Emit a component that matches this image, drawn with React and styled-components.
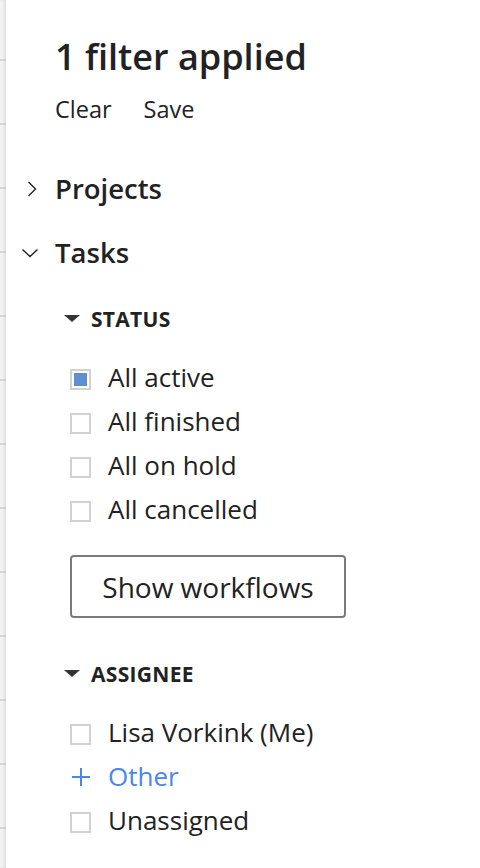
import * as React from "react";
import styled, { createGlobalStyle } from "styled-components";

const GlobalStyle = createGlobalStyle`
  html, body {
    margin: 0;
    padding: 0;
    background: #ffffff;
  }
  body {
    font-family: "Open Sans", "Noto Sans", sans-serif;
    color: #222222;
  }
`;

const statusItems = [
  { label: "All active", checked: true },
  { label: "All finished", checked: false },
  { label: "All on hold", checked: false },
  { label: "All cancelled", checked: false },
];

const ChevronRight = () => (
  <svg width="16" height="16" viewBox="0 0 16 16" fill="none">
    <path d="M4.5 1 L11.5 8 L4.5 15" stroke="#222" strokeWidth="1.4" />
  </svg>
);

const ChevronDown = () => (
  <svg width="16" height="16" viewBox="0 0 16 16" fill="none">
    <path d="M0.5 4.5 L8 11.5 L15.5 4.5" stroke="#222" strokeWidth="1.4" />
  </svg>
);

const Caret = () => (
  <svg width="16" height="8" viewBox="0 0 16 8">
    <path d="M0 0 H16 L8 7 Z" fill="#333" />
  </svg>
);

const Plus = () => (
  <svg width="20" height="20" viewBox="0 0 20 20" fill="none">
    <path d="M10 1 V19 M1 10 H19" stroke="#4a86ec" strokeWidth="2" />
  </svg>
);

const App = () => {
  return (
    <>
      <GlobalStyle />
      <Page>
        <Backdrop />
        <Panel>
          <Title>1 filter applied</Title>
          <Actions>
            <ActionLink>Clear</ActionLink>
            <ActionLink>Save</ActionLink>
          </Actions>

          <SectionRow $first>
            <ChevronBox $offset="4px">
              <ChevronRight />
            </ChevronBox>
            <SectionTitle>Projects</SectionTitle>
          </SectionRow>

          <SectionRow>
            <ChevronBox $offset="2px">
              <ChevronDown />
            </ChevronBox>
            <SectionTitle>Tasks</SectionTitle>
          </SectionRow>

          <Group>
            <GroupHeader>
              <Caret />
              <GroupTitle>STATUS</GroupTitle>
            </GroupHeader>
            <List>
              {statusItems.map((item) => (
                <Option key={item.label}>
                  <Box $checked={item.checked} />
                  <OptionText>{item.label}</OptionText>
                </Option>
              ))}
            </List>
            <OutlineButton>Show workflows</OutlineButton>
          </Group>

          <Group $spaced>
            <GroupHeader>
              <Caret />
              <GroupTitle>ASSIGNEE</GroupTitle>
            </GroupHeader>
            <List>
              <Option>
                <Box />
                <OptionText>Lisa Vorkink (Me)</OptionText>
              </Option>
              <Option>
                <PlusBox>
                  <Plus />
                </PlusBox>
                <OptionText $link>Other</OptionText>
              </Option>
              <Option>
                <Box />
                <OptionText>Unassigned</OptionText>
              </Option>
            </List>
          </Group>
        </Panel>
      </Page>
    </>
  );
};

const Page = styled.div`
  display: flex;
  width: 480px;
  min-height: 868px;
`;

const Backdrop = styled.div`
  width: 6px;
  flex-shrink: 0;
  background:
    repeating-linear-gradient(
      to bottom,
      transparent 0px,
      transparent 58px,
      #d6d6d6 58px,
      #d6d6d6 60px,
      transparent 60px,
      transparent 64px
    ),
    linear-gradient(to right, #f4f4f4, #ececec);
  background-position: 0 1px, 0 0;
  box-shadow: inset -2px 0 3px rgba(0, 0, 0, 0.05);
`;

const Panel = styled.div`
  flex: 1;
  background: #ffffff;
  padding: 32px 20px 0 14px;
  box-sizing: border-box;
`;

const Title = styled.h1`
  margin: 0 0 0 35px;
  font-size: 36px;
  line-height: 50px;
  font-weight: 600;
  color: #222;
`;

const Actions = styled.div`
  display: flex;
  gap: 32px;
  margin: 11px 0 0 35px;
`;

const ActionLink = styled.span`
  font-size: 23.5px;
  line-height: 32px;
  color: #222;
`;

const SectionRow = styled.div`
  display: flex;
  align-items: center;
  height: 40px;
  margin-top: ${(p) => (p.$first ? "44px" : "24px")};
`;

const ChevronBox = styled.div`
  width: 35px;
  display: flex;
  align-items: center;
  padding-left: ${(p) => p.$offset || "0px"};
  box-sizing: border-box;
`;

const SectionTitle = styled.span`
  font-size: 27.5px;
  line-height: 40px;
  font-weight: 600;
  color: #222;
`;

const Group = styled.div`
  margin-left: 44px;
  margin-top: ${(p) => (p.$spaced ? "41px" : "31px")};
`;

const GroupHeader = styled.div`
  display: flex;
  align-items: center;
  gap: 11px;
  height: 30px;
`;

const GroupTitle = styled.span`
  font-size: 21px;
  line-height: 30px;
  font-weight: 700;
  color: #222;
  letter-spacing: 0.3px;
`;

const List = styled.div`
  display: flex;
  flex-direction: column;
  margin-top: 21px;
  margin-left: 6px;
`;

const Option = styled.div`
  display: flex;
  align-items: center;
  gap: 17px;
  height: 44px;
`;

const Box = styled.span`
  width: 21px;
  height: 21px;
  box-sizing: border-box;
  border: 2px solid #d2d2d2;
  padding: 2px;
  background: ${(p) => (p.$checked ? "#5f8fd2" : "#fff")};
  background-clip: content-box;
  flex-shrink: 0;
  margin-top: 4px;
`;

const PlusBox = styled.span`
  width: 21px;
  display: flex;
  justify-content: center;
  margin-top: 1px;
`;

const OptionText = styled.span`
  font-size: 26px;
  line-height: 44px;
  color: ${(p) => (p.$link ? "#4a86ec" : "#222")};
`;

const OutlineButton = styled.button`
  display: flex;
  align-items: center;
  justify-content: center;
  width: 276px;
  height: 63px;
  margin: 24px 0 0 6px;
  border: 2px solid #7a7a7a;
  border-radius: 4px;
  background: #fff;
  font-family: "Open Sans", "Noto Sans", sans-serif;
  font-size: 28px;
  color: #222;
  padding: 0;
`;

export default App;
